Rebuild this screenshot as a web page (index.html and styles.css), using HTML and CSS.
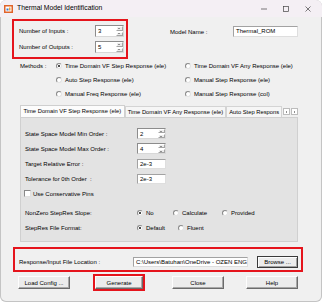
FILE: index.html
```html
<!DOCTYPE html>
<html lang="en">
<head>
    <meta charset="UTF-8">
    <title>Thermal Model Identification</title>
    <link rel="stylesheet" href="styles.css">
</head>
<body>
    <div class="window">
        <div class="titlebar">
            <svg class="app-icon" width="9" height="8" viewBox="0 0 9 8">
                <rect x="0" y="0" width="9" height="8" fill="#e0632a"/>
                <rect x="1.5" y="1.5" width="6" height="5" fill="#fff"/>
                <rect x="2.5" y="3.5" width="2" height="2" fill="#3b78c4"/>
                <rect x="5" y="2.5" width="1.5" height="3" fill="#f2a33a"/>
            </svg>
            <span class="title">Thermal Model Identification</span>
            <div class="win-controls">
                <span class="wc"><svg width="6" height="6" viewBox="0 0 6 6"><line x1="0" y1="3" x2="6" y2="3" stroke="#444" stroke-width="0.7"/></svg></span>
                <span class="wc"><svg width="6" height="6" viewBox="0 0 6 6"><rect x="0.5" y="0.5" width="5" height="5" fill="none" stroke="#444" stroke-width="0.7"/></svg></span>
                <span class="wc"><svg width="6" height="6" viewBox="0 0 6 6"><path d="M0.5 0.5 L5.5 5.5 M5.5 0.5 L0.5 5.5" stroke="#444" stroke-width="0.7"/></svg></span>
            </div>
        </div>

        <div class="top">
            <div class="highlight io-box">
                <div class="row">
                    <span class="io-lbl">Number of Inputs :</span>
                    <span class="spin"><span class="val">3</span><span class="arrows"><span class="up"></span><span class="down"></span></span></span>
                </div>
                <div class="row">
                    <span class="io-lbl">Number of Outputs :</span>
                    <span class="spin"><span class="val">5</span><span class="arrows"><span class="up"></span><span class="down"></span></span></span>
                </div>
            </div>
            <div class="model">
                <span class="model-lbl">Model Name :</span>
                <span class="field model-field">Thermal_ROM</span>
            </div>
        </div>

        <!-- methods -->
        <div class="methods">
            <span class="methods-lbl">Methods :</span>
            <div class="method-grid">
                <span class="opt"><span class="radio checked"></span>Time Domain VF Step Response (ele)</span>
                <span class="opt"><span class="radio"></span>Time Domain VF Any Response (ele)</span>
                <span class="opt"><span class="radio"></span>Auto Step Response (ele)</span>
                <span class="opt"><span class="radio"></span>Manual Step Response (ele)</span>
                <span class="opt"><span class="radio"></span>Manual Freq Response (ele)</span>
                <span class="opt"><span class="radio"></span>Manual Step Response (col)</span>
            </div>
        </div>

        <div class="tabs">
            <div class="tabstrip">
                <span class="tab selected tab-1">Time Domain VF Step Response (ele)</span>
                <span class="tab tab-2">Time Domain VF Any Response (ele)</span>
                <span class="tab tab-3">Auto Step Respons</span>
                <span class="tab-scroll">
                    <span class="scroll-btn"><span class="tri left"></span></span>
                    <span class="scroll-btn"><span class="tri right"></span></span>
                </span>
            </div>
            <div class="tabpage">
                <div class="page-row">
                    <span class="page-lbl">State Space Model Min Order :</span>
                    <span class="spin small"><span class="val">2</span><span class="arrows"><span class="up"></span><span class="down"></span></span></span>
                </div>
                <div class="page-row">
                    <span class="page-lbl">State Space Model Max Order :</span>
                    <span class="spin small"><span class="val">4</span><span class="arrows"><span class="up"></span><span class="down"></span></span></span>
                </div>
                <div class="page-row">
                    <span class="page-lbl">Target Relative Error :</span>
                    <span class="field page-field">2e-3</span>
                </div>
                <div class="page-row">
                    <span class="page-lbl">Tolerance for 0th Order&nbsp; :</span>
                    <span class="field page-field">2e-3</span>
                </div>
                <div class="page-row">
                    <span class="check"></span>
                    <span class="check-lbl">Use Conservative Pins</span>
                </div>
                <div class="page-row gap-above">
                    <span class="page-lbl">NonZero StepRes Slope:</span>
                    <span class="opt w-no"><span class="radio checked"></span>No</span>
                    <span class="opt w-calc"><span class="radio"></span>Calculate</span>
                    <span class="opt"><span class="radio"></span>Provided</span>
                </div>
                <div class="page-row">
                    <span class="page-lbl">StepRes File Format:</span>
                    <span class="opt w-default"><span class="radio checked"></span>Default</span>
                    <span class="opt"><span class="radio"></span>Fluent</span>
                </div>
            </div>
        </div>

        <div class="highlight file-box">
            <span class="file-lbl">Response/Input File Location :</span>
            <span class="field file-field">C:\Users\Batuhan\OneDrive - OZEN ENG</span>
            <button class="btn browse">Browse ...</button>
        </div>

        <div class="buttons">
            <button class="btn">Load Config ...</button>
            <span class="highlight gen-box"><button class="btn gen">Generate</button></span>
            <button class="btn close">Close</button>
            <button class="btn help">Help</button>
        </div>
    </div>
</body>
</html>
```

FILE: styles.css
```css
* {
    box-sizing: border-box;
}
body {
    margin: 0;
    background: #fff;
    font-family: "Liberation Sans", Arial, sans-serif;
    font-size: 6px;
    line-height: 1;
    color: #000;
}
.window {
    width: 322px;
    height: 302px;
    background: #f0f0f0;
    border-radius: 6px;
    box-shadow: inset 0 0 0 1px #c4c4c4;
    overflow: hidden;
}

/* title bar */
.titlebar {
    height: 17px;
    display: flex;
    align-items: center;
    padding-left: 4px;
    background: #f4eff4;
}
.app-icon {
    margin-right: 4px;
}
.title {
    font-size: 6.8px;
}
.win-controls {
    margin-left: auto;
    margin-right: 3px;
    display: flex;
}
.wc {
    width: 22px;
    height: 17px;
    display: flex;
    align-items: center;
    justify-content: center;
}

/* red highlight boxes */
.highlight {
    border: 2px solid #e5141c;
}

/* top section */
.top {
    display: flex;
    align-items: flex-start;
    padding: 2px 0 0 12px;
}
.io-box {
    width: 116px;
    padding: 4px 2px 4px 5px;
    display: flex;
    flex-direction: column;
    gap: 4px;
}
.row {
    display: flex;
    align-items: center;
    height: 12px;
}
.io-lbl {
    width: 76px;
}
.model {
    display: flex;
    align-items: center;
    margin: 7px 0 0 42px;
}
.model-lbl {
    width: 63px;
}

/* inputs */
.field {
    display: block;
    background: #fff;
    border: 1px solid #a2a2a2;
    border-right-color: #dedede;
    border-bottom-color: #dedede;
    padding: 0 2px;
    line-height: 9px;
    white-space: nowrap;
    overflow: hidden;
}
.model-field {
    width: 65px;
    height: 11px;
}
.spin {
    display: flex;
    width: 29px;
    height: 12px;
    background: #fff;
    border: 1px solid #8c8c8c;
    border-right-color: #d8d8d8;
    border-bottom-color: #d8d8d8;
}
.spin.small {
    height: 11px;
}
.spin .val {
    flex: 1;
    padding-left: 2px;
    display: flex;
    align-items: center;
}
.spin .arrows {
    width: 8px;
    display: flex;
    flex-direction: column;
    gap: 1px;
    padding: 0 0 0 1px;
}
.spin .up,
.spin .down {
    flex: 1;
    background: #ececec;
    border: 1px solid #a5a5a5;
    border-top-color: #fff;
    border-left-color: #fff;
    position: relative;
}
.spin .up::after,
.spin .down::after {
    content: "";
    position: absolute;
    left: 1px;
    border-left: 1.5px solid transparent;
    border-right: 1.5px solid transparent;
}
.spin .up::after {
    top: 0.5px;
    border-bottom: 1.5px solid #333;
}
.spin .down::after {
    top: 0.5px;
    border-top: 1.5px solid #333;
}

/* radios */
.opt {
    display: flex;
    align-items: center;
    white-space: nowrap;
}
.radio {
    width: 6px;
    height: 6px;
    border-radius: 50%;
    background: #fff;
    border: 1px solid #8a8a8a;
    border-right-color: #e2e2e2;
    border-bottom-color: #e2e2e2;
    margin-right: 3px;
    position: relative;
}
.radio.checked::after {
    content: "";
    position: absolute;
    left: 1px;
    top: 1px;
    width: 2px;
    height: 2px;
    border-radius: 50%;
    background: #111;
}

/* methods */
.methods {
    display: flex;
    padding-left: 20px;
}
.methods-lbl {
    width: 36px;
    line-height: 14px;
}
.method-grid {
    display: grid;
    grid-template-columns: 129px auto;
    grid-auto-rows: 14px;
}

/* tabs */
.tabs {
    margin: 5px 0 0 20px;
    width: 278px;
}
.tabstrip {
    display: flex;
    align-items: flex-end;
    height: 11px;
}
.tab {
    height: 11px;
    border: 1px solid #d4d4d4;
    border-bottom: none;
    background: #f6f6f6;
    white-space: nowrap;
    overflow: hidden;
    padding: 0;
    line-height: 10px;
    text-align: center;
    font-size: 5.8px;
}
.tab.selected {
    height: 12px;
    background: #fcfcfc;
    border-color: #cfcfcf;
}
.tab-1 {
    width: 105px;
}
.tab-2 {
    width: 102px;
}
.tab-3 {
    width: 56px;
    padding-left: 2px;
    text-align: left;
}
.tab-scroll {
    display: flex;
    gap: 1px;
    padding: 0 0 2px 1px;
}
.scroll-btn {
    width: 7px;
    height: 7px;
    background: #fff;
    border: 1px solid #bcbcbc;
    display: flex;
    align-items: center;
    justify-content: center;
}
.tri {
    border-top: 1.5px solid transparent;
    border-bottom: 1.5px solid transparent;
}
.tri.left {
    border-right: 1.5px solid #222;
}
.tri.right {
    border-left: 1.5px solid #222;
}
.tabpage {
    height: 125px;
    background: #e3e3e3;
    border: 1px solid #d0d0d0;
    padding: 8px 0 0 4px;
}
.page-row {
    display: flex;
    align-items: center;
    height: 15px;
}
.page-row.gap-above {
    margin-top: 4px;
}
.page-lbl {
    width: 112px;
}
.page-field {
    width: 29px;
    height: 10px;
}
.check {
    width: 7px;
    height: 7px;
    margin-left: -1px;
    background: #fff;
    border: 1px solid #8a8a8a;
    border-right-color: #e0e0e0;
    border-bottom-color: #e0e0e0;
}
.check-lbl {
    margin-left: 2px;
}
.w-no {
    width: 36px;
}
.w-calc {
    width: 49px;
}
.w-default {
    width: 41px;
}

/* file location */
.file-box {
    display: flex;
    align-items: center;
    margin: 5px 0 0 13px;
    width: 290px;
    height: 25px;
    padding: 7px 3px 2px 4px;
}
.file-lbl {
    width: 114px;
}
.file-field {
    width: 115px;
    height: 10px;
    padding-right: 0;
}

/* buttons */
.btn {
    font-family: "Liberation Sans", Arial, sans-serif;
    font-size: 6px;
    color: #000;
    height: 13px;
    width: 52px;
    padding: 0;
    background: #ececec;
    border: 1px solid;
    border-color: #fdfdfd #6b6b6b #6b6b6b #fdfdfd;
    box-shadow: inset -1px -1px 0 #a8a8a8;
}
.browse {
    width: 41px;
    height: 12px;
    margin-left: 9px;
    border-color: #3a3a3a;
    box-shadow: inset 1px 1px 0 #fdfdfd, inset -1px -1px 0 #a0a0a0;
}
.buttons {
    display: flex;
    align-items: center;
    height: 17px;
    margin: 2px 0 0 18px;
}
.gen-box {
    display: flex;
    margin-left: 23px;
}
.gen {
    width: 48px;
}
.close {
    margin-left: 27px;
}
.help {
    margin-left: 22px;
}
```
